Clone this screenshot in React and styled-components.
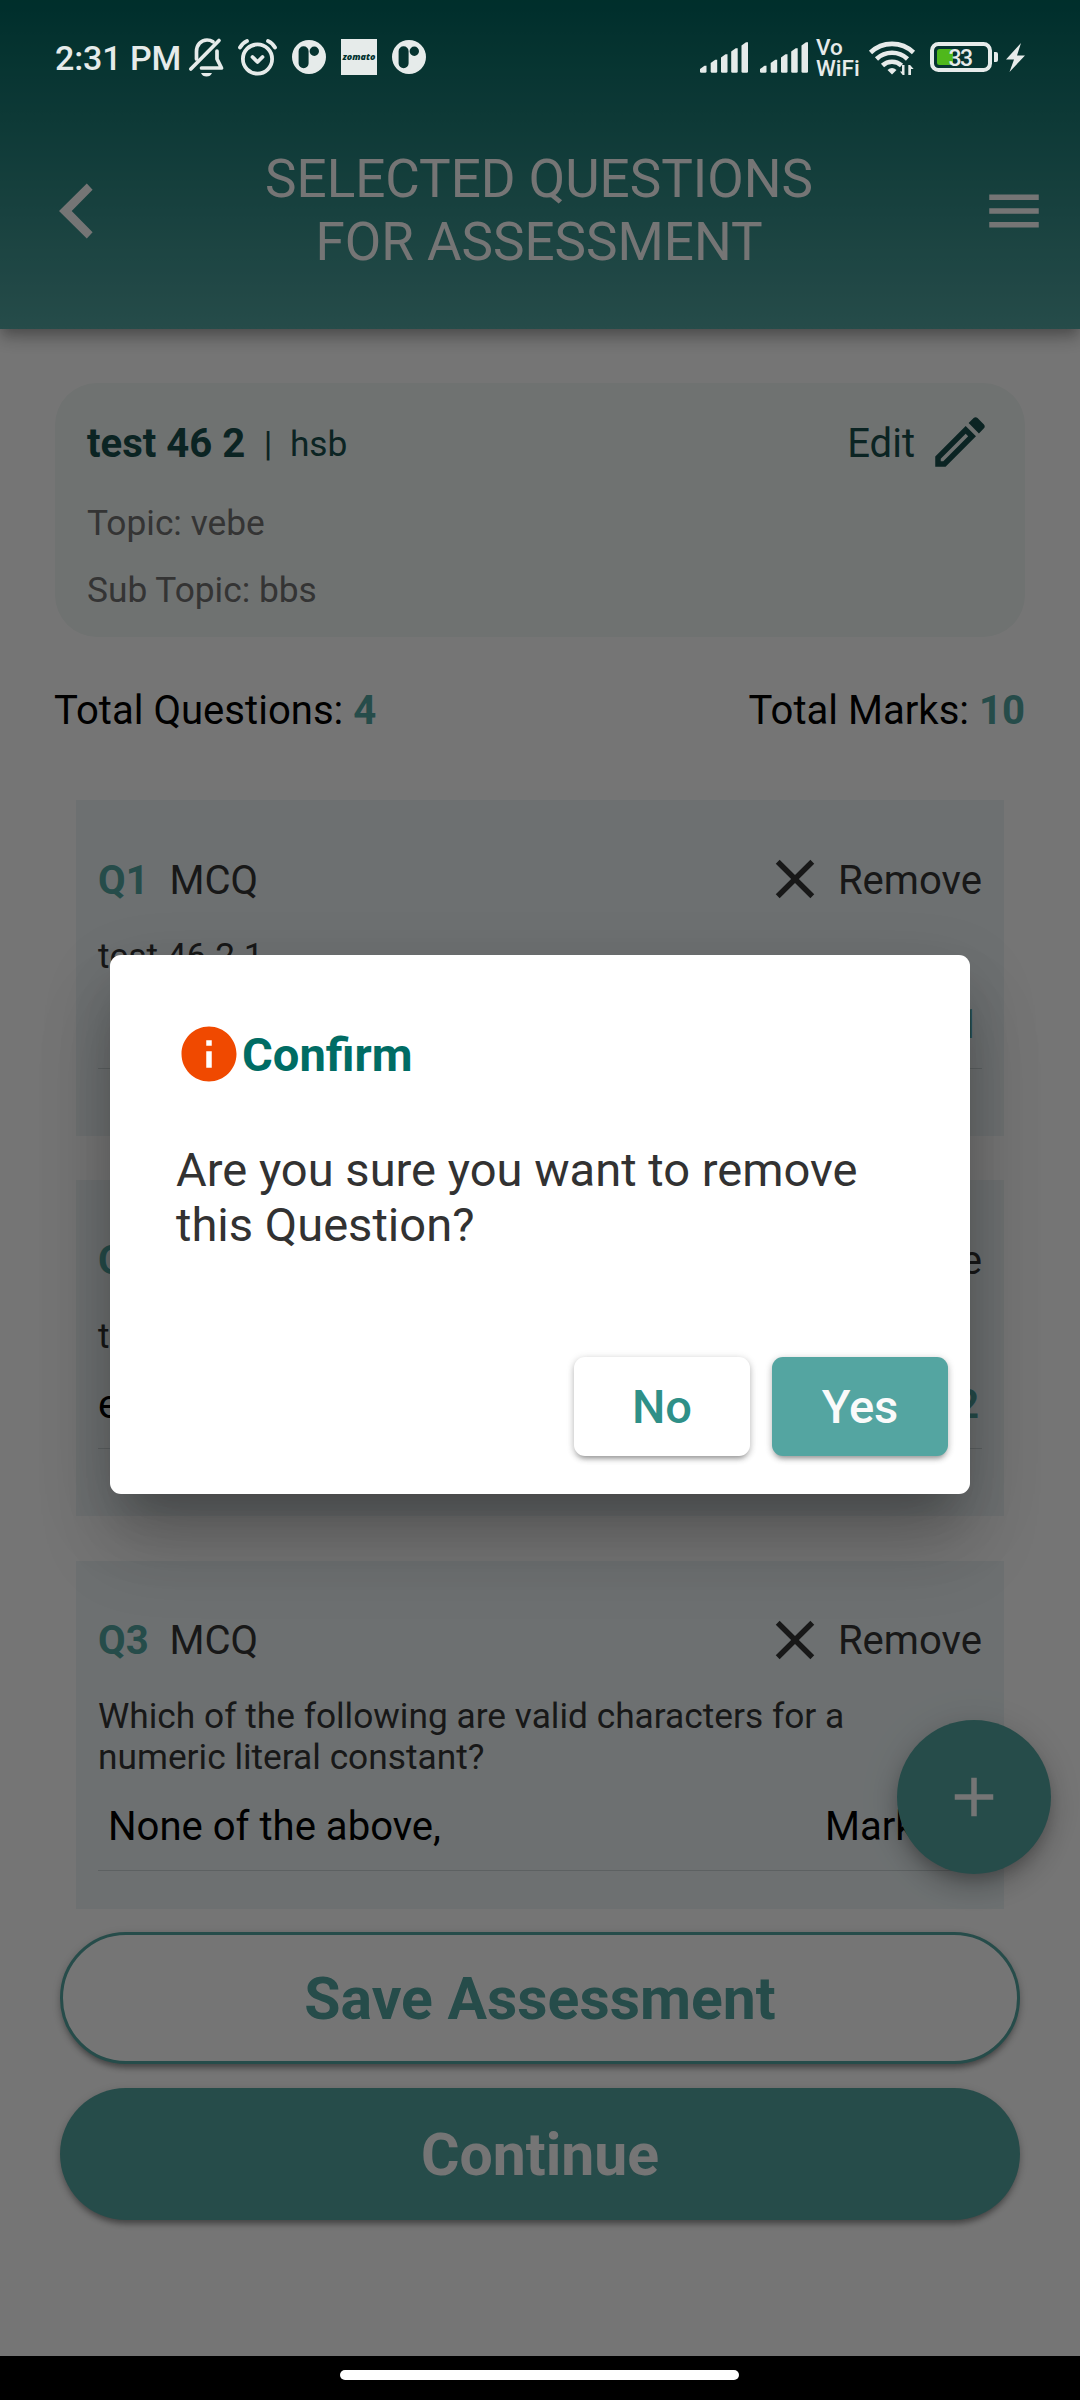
import React from "react";
import styled, { createGlobalStyle } from "styled-components";

const TEAL = "#53a5a1";
const INK = "#363636";

const Global = createGlobalStyle`
  body { margin: 0; background: #000; }
  *, *::before, *::after { box-sizing: border-box; }
  button { font: inherit; border: 0; padding: 0; background: none; color: inherit; }
`;

const Screen = styled.div`
  position: relative;
  width: 1080px;
  height: 2400px;
  display: flex;
  flex-direction: column;
  overflow: hidden;
  background: #fff;
  font-family: Roboto, "Liberation Sans", sans-serif;
  color: #000;
`;

const Header = styled.header`
  flex: none;
  height: 329px;
  padding-top: 93px;
  display: grid;
  grid-template-columns: 130px 1fr 130px;
  align-items: center;
  color: #fff;
  background: linear-gradient(180deg, #00665f 0%, ${TEAL} 100%);
  box-shadow: 0 6px 11px -3px rgba(0, 0, 0, 0.2), 0 11px 14px rgba(0, 0, 0, 0.14),
    0 3px 27px rgba(0, 0, 0, 0.12);
`;

const HeaderTitle = styled.h1`
  margin: 0;
  padding: 0 2px 0 0;
  text-align: center;
  font-weight: 400;
  font-size: 53px;
  line-height: 63px;
`;

const IconButton = styled.button`
  display: flex;
  justify-content: ${(p) => (p.$end ? "flex-end" : "flex-start")};
  padding: ${(p) => (p.$end ? "0 33px 0 0" : "0 0 0 43px")};
`;

const Icon = styled.svg`
  display: block;
  flex: none;
  width: ${(p) => p.$w || 66}px;
  height: ${(p) => p.$h || p.$w || 66}px;
  fill: currentColor;
`;

const Content = styled.main`
  flex: 1;
  min-height: 0;
  padding: 54px 55px 0;
  display: flex;
  flex-direction: column;
`;

const SummaryCard = styled.section`
  flex: none;
  height: 254px;
  padding: 26px 32px 0;
  border-radius: 42px;
  background: #f2f8f6;
`;

const Row = styled.div`
  display: flex;
  align-items: center;
  justify-content: space-between;
  height: ${(p) => p.$h || 66}px;
`;

const Group = styled.div`
  display: flex;
  align-items: center;
  gap: ${(p) => p.$gap}px;
`;

const Label = styled.span`
  padding-top: 3px;
  font-size: ${(p) => p.$size || 40.1}px;
  line-height: 48px;
  font-weight: ${(p) => (p.$bold ? 700 : 400)};
  color: ${(p) => p.$color || "inherit"};
  white-space: pre;
`;

const SummaryTop = styled(Row)`
  color: #194f4d;
`;

const SummaryLine = styled.p`
  margin: ${(p) => p.$top}px 0 0;
  font-size: 35.3px;
  line-height: 42px;
  color: #727272;
`;

const Totals = styled(Row)`
  flex: none;
  margin: 47px 0 0 -1px;
  height: 50px;
`;

const Value = styled.b`
  font-weight: 700;
  color: ${TEAL};
`;

const List = styled.section`
  flex: none;
  height: 1109px;
  margin-top: 66px;
  padding: 0 21px;
  display: flex;
  flex-direction: column;
  gap: 44.3px;
  overflow: hidden;
`;

const Question = styled.article`
  flex: none;
  padding: 46px 22px 67px;
  background: #edf5f7;
  color: ${INK};
`;

const QuestionText = styled.p`
  margin: 23.5px 0 0;
  width: 800px;
  font-size: 35.3px;
  line-height: 41.3px;
`;

const Answer = styled.div`
  display: flex;
  justify-content: space-between;
  margin-top: 21.2px;
  padding: 0 3px 19px 0;
  border-bottom: 1px solid #cbd4d6;
  color: #000;
`;

const WideButton = styled.button`
  flex: none;
  height: 132px;
  margin: ${(p) => p.$top}px 5px 0;
  padding-top: 2px;
  border-radius: 66px;
  border: ${(p) => (p.$filled ? 0 : 3)}px solid ${TEAL};
  background: ${(p) => (p.$filled ? TEAL : "#fff")};
  color: ${(p) => (p.$filled ? "#fff" : TEAL)};
  font-size: 58.9px;
  font-weight: 700;
  line-height: 70px;
  box-shadow: 0 7px 5px -4px rgba(0, 0, 0, 0.2), 0 4px 6px rgba(0, 0, 0, 0.2),
    0 2px 12px rgba(0, 0, 0, 0.12);
`;

const Fab = styled.button`
  position: absolute;
  left: 896.5px;
  top: 1720px;
  width: 154px;
  height: 154px;
  border-radius: 50%;
  display: grid;
  place-items: center;
  color: #fff;
  background: ${TEAL};
  box-shadow: 0 8px 14px -3px rgba(0, 0, 0, 0.2), 0 16px 27px rgba(0, 0, 0, 0.14),
    0 3px 40px rgba(0, 0, 0, 0.12);
`;

const NavBar = styled.footer`
  flex: none;
  position: relative;
  z-index: 3;
  height: 44px;
  padding: 14px 1px 0 0;
  display: flex;
  justify-content: center;
  background: #000;
`;

const NavPill = styled.div`
  width: 399px;
  height: 10px;
  border-radius: 5px;
  background: #fff;
`;

const Scrim = styled.div`
  position: absolute;
  inset: 0;
  z-index: 1;
  padding-top: 49px;
  display: grid;
  place-items: center;
  background: rgba(0, 0, 0, 0.54);
`;

const Dialog = styled.div`
  width: 860px;
  height: 539px;
  padding: 66px 22px 38.5px 66px;
  display: flex;
  flex-direction: column;
  border-radius: 11px;
  background: #fff;
  box-shadow: 0 30px 41px -19px rgba(0, 0, 0, 0.2), 0 54px 76px 2px rgba(0, 0, 0, 0.14),
    0 25px 74px 2px rgba(0, 0, 0, 0.12);
`;

const DialogTitle = styled.div`
  display: flex;
  align-items: center;
  height: 66px;
  color: #f04900;
`;

const DialogHeading = styled.h2`
  margin: 0;
  font-size: 47.1px;
  line-height: 55px;
  font-weight: 700;
  color: #006c64;
`;

const DialogText = styled.p`
  margin: 55px 0 0;
  width: 728px;
  font-size: 47.1px;
  line-height: 55px;
  color: #323232;
`;

const Actions = styled.div`
  margin-top: auto;
  display: flex;
  justify-content: flex-end;
  gap: 22px;
`;

const ActionButton = styled.button`
  && {
    width: 176px;
    height: 99px;
    border-radius: 11px;
    background: ${(p) => (p.$primary ? "#54a5a1" : "#fff")};
    color: ${(p) => (p.$primary ? "#fafafa" : "#2f9088")};
    font-size: 47.1px;
    font-weight: 500;
    line-height: 55px;
    box-shadow: 0 6px 4px -4px rgba(0, 0, 0, 0.2), 0 3px 6px rgba(0, 0, 0, 0.2),
      0 1px 8px rgba(0, 0, 0, 0.12);
  }
`;

const StatusBar = styled.div`
  position: absolute;
  inset: 0 0 auto 0;
  z-index: 2;
  height: 114px;
  padding: 0 55px;
  display: flex;
  align-items: center;
  justify-content: space-between;
  color: #e6ebea;
`;

const Clock = styled.span`
  width: 125px;
  padding-top: 2px;
  font-size: 34px;
  letter-spacing: -0.1px;
  line-height: 42px;
  font-weight: 500;
  white-space: nowrap;
`;

const StatusLeft = styled.div`
  display: flex;
  align-items: center;
`;

const StatusIcon = styled(Icon)`
  margin-left: ${(p) => p.$ml || 0}px;
  overflow: visible;
`;

const Zomato = styled.span`
  width: 36px;
  height: 36px;
  margin-left: 15px;
  display: flex;
  align-items: center;
  justify-content: center;
  background: #e6ebea;
  color: #03332f;
  font: italic 800 9px/12px "Open Sans", sans-serif;
`;

const VoWifi = styled.span`
  display: flex;
  flex-direction: column;
  margin-left: 8px;
  padding-top: 1px;
  width: 44px;
  font: 500 22.5px/21px Roboto, sans-serif;
`;

const BatteryText = styled.text`
  font: 500 23px Roboto, sans-serif;
`;

const SIGNAL = [
  [0, 23.5],
  [10.7, 17.5],
  [21, 12],
  [31.2, 6],
  [41.5, 0],
];

const Signal = ({ ml }) => (
  <StatusIcon $w={48} $h={31} $ml={ml} viewBox="0 0 48 31">
    {SIGNAL.map(([x, y]) => (
      <path key={x} d={`M${x} ${y + 3.5}l4.5-3.2h2V29.5q0 1.3-1.3 1.3H${x + 1.3}q-1.3 0-1.3-1.3z`} />
    ))}
  </StatusIcon>
);

const AppBadge = ({ ml }) => (
  <StatusIcon $w={34} $ml={ml} viewBox="0 0 34 34">
    <path
      fillRule="evenodd"
      d="M17 0a17 17 0 1 0 0 34 17 17 0 0 0 0-34zM11.600 6.300a5 5 0 0 1 5 5v12a5 5 0 0 1-10 0v-12a5 5 0 0 1 5-5zM22.300 6.600a4.700 4.700 0 1 1 0 9.400 4.700 4.700 0 0 1 0-9.400z"
    />
  </StatusIcon>
);

const CloseIcon = () => (
  <Icon viewBox="0 0 24 24">
    <path d="M19 6.41L17.59 5 12 10.59 6.41 5 5 6.41 10.59 12 5 17.59 6.41 19 12 13.41 17.59 19 19 17.590 13.41 12z" />
  </Icon>
);

const questions = [
  { id: "Q1", text: "test 46 2 1", answer: "", marks: "1" },
  { id: "Q2", text: "test 46 2", answer: "e", marks: "2" },
  {
    id: "Q3",
    text: "Which of the following are valid characters for a numeric literal constant?",
    answer: " None of the above,",
    marks: "4",
  },
];

const QuestionCard = ({ q }) => (
  <Question>
    <Row>
      <Group $gap={1}>
        <Label $bold $color={TEAL}>{q.id}</Label>
        <Label>{"  MCQ"}</Label>
      </Group>
      <Group $gap={10}>
        <CloseIcon />
        <Label>Remove</Label>
      </Group>
    </Row>
    <QuestionText>{q.text}</QuestionText>
    <Answer>
      <Label>{q.answer}</Label>
      <Label>
        Marks: <Value>{q.marks}</Value>
      </Label>
    </Answer>
  </Question>
);

export default function App() {
  return (
    <>
      <Global />
      <Screen>
        <Header>
          <IconButton aria-label="Back">
            <Icon $w={66} viewBox="0 0 66 66">
              <path d="M43.800 5.500L49.600 11.800 28.700 33 49.600 54.200 43.800 60.500 16 33z" />
            </Icon>
          </IconButton>
          <HeaderTitle>
            SELECTED QUESTIONS
            <br />
            FOR ASSESSMENT
          </HeaderTitle>
          <IconButton $end aria-label="Menu">
            <Icon viewBox="0 0 24 24">
              <path d="M3 18h18v-2H3v2zm0-5h18v-2H3v2zm0-7v2h18V6H3z" />
            </Icon>
          </IconButton>
        </Header>

        <Content>
          <SummaryCard>
            <SummaryTop>
              <Group $gap={1}>
                <Label $bold>test 46 2</Label>
                <Label $size={35.3}>{"  |  hsb"}</Label>
              </Group>
              <Group $gap={12}>
                <Label>Edit</Label>
                <Icon viewBox="0 0 24 24">
                  <path d="M14.06 9.02l.92.92L5.92 19H5v-.92l9.06-9.06M17.66 3c-.25 0-.51.1-.7.29l-1.83 1.83 3.75 3.75 1.83-1.83c.39-.39.39-1.02 0-1.41l-2.34-2.34c-.2-.2-.45-.29-.71-.29zm-3.6 3.19L3 17.25V21h3.75L17.81 9.94l-3.75-3.75z" />
                </Icon>
              </Group>
            </SummaryTop>
            <SummaryLine $top={27}>Topic: vebe</SummaryLine>
            <SummaryLine $top={25}>Sub Topic: bbs</SummaryLine>
          </SummaryCard>

          <Totals>
            <Label>
              Total Questions: <Value>4</Value>
            </Label>
            <Label>
              Total Marks: <Value>10</Value>
            </Label>
          </Totals>

          <List>
            {questions.map((q) => (
              <QuestionCard key={q.id} q={q} />
            ))}
          </List>

          <WideButton $top={23}>Save Assessment</WideButton>
          <WideButton $top={24} $filled>Continue</WideButton>
        </Content>

        <Fab aria-label="Add">
          <Icon viewBox="0 0 24 24">
            <path d="M19 13h-6v6h-2v-6H5v-2h6V5h2v6h6v2z" />
          </Icon>
        </Fab>

        <Scrim>
          <Dialog role="dialog">
            <DialogTitle>
              <Icon viewBox="0 0 24 24">
                <path d="M12 2C6.48 2 2 6.48 2 12s4.480 10 10 10 10-4.480 10-10S17.520 2 12 2zm1 15h-2v-6h2v6zm0-8h-2V7h2v2z" />
              </Icon>
              <DialogHeading>Confirm</DialogHeading>
            </DialogTitle>
            <DialogText>Are you sure you want to remove this Question?</DialogText>
            <Actions>
              <ActionButton>No</ActionButton>
              <ActionButton $primary>Yes</ActionButton>
            </Actions>
          </Dialog>
        </Scrim>

        <StatusBar>
          <StatusLeft>
            <Clock>2:31 PM</Clock>
            <StatusIcon $w={35} $h={39} $ml={9} viewBox="0 0 35 39">
              <g fill="none" stroke="currentColor" strokeWidth="3.700" strokeLinecap="round" strokeLinejoin="round">
                <path d="M1.800 31L30 2.500" />
                <path d="M7.500 21V13.500C7.500 7 12 2 18 2q3.500 0 6 1.800" />
                <path d="M28 13V21L32.500 30H12.500" />
              </g>
              <path d="M12 35h11q-1.500 3.500-5.500 3.500T12 35z" />
            </StatusIcon>
            <StatusIcon $w={39} $h={37} $ml={14} viewBox="0 0 39 37">
              <g fill="none" stroke="currentColor" strokeWidth="3.800" strokeLinecap="round" strokeLinejoin="round">
                <circle cx="19.500" cy="20" r="14.600" />
                <path d="M14.500 18l5 5 5-5" />
                <path d="M2 8.500Q4.500 4 9 2M37 8.500Q34.500 4 30 2" />
              </g>
            </StatusIcon>
            <AppBadge ml={15} />
            <Zomato>zomato</Zomato>
            <AppBadge ml={15} />
          </StatusLeft>
          <StatusLeft>
            <Signal ml={0} />
            <Signal ml={12} />
            <VoWifi>
              <span>Vo</span>
              <span>WiFi</span>
            </VoWifi>
            <StatusIcon $w={46} $h={35} $ml={9} viewBox="0 0 46 35">
              <g fill="none" stroke="currentColor" strokeWidth="4.600">
                <path d="M1.500 12.500a31 31 0 0 1 43 0" />
                <path d="M7.500 19a22.500 22.500 0 0 1 31 0" />
                <path d="M13.500 25.500a14 14 0 0 1 19 0" />
              </g>
              <path d="M18.500 30q4.500-4 9 0L23 34.500z" />
              <path d="M35.500 25v10h-1.800l-2.700-3.500h2V25zM39.300 35V25h1.800l3.500 4h-2.600v6z" />
            </StatusIcon>
            <StatusIcon $w={68} $h={30} $ml={15} viewBox="0 0 68 30">
              <rect x="2" y="2" width="58" height="26" rx="6.500" fill="none" stroke="currentColor" strokeWidth="4" />
              <path d="M64 10h2q2 0 2 2v6q0 2-2 2h-2z" />
              <rect x="7" y="7" width="16" height="16" rx="2.500" fill="#4fb81c" />
              <BatteryText x="18.500" y="24" textLength="24.500">33</BatteryText>
            </StatusIcon>
            <StatusIcon $w={19} $h={29} $ml={8} viewBox="0 0 19 29">
              <path d="M15 0L0 16.500h8L3.500 29 19 12.500h-8z" />
            </StatusIcon>
          </StatusLeft>
        </StatusBar>

        <NavBar>
          <NavPill />
        </NavBar>
      </Screen>
    </>
  );
}
